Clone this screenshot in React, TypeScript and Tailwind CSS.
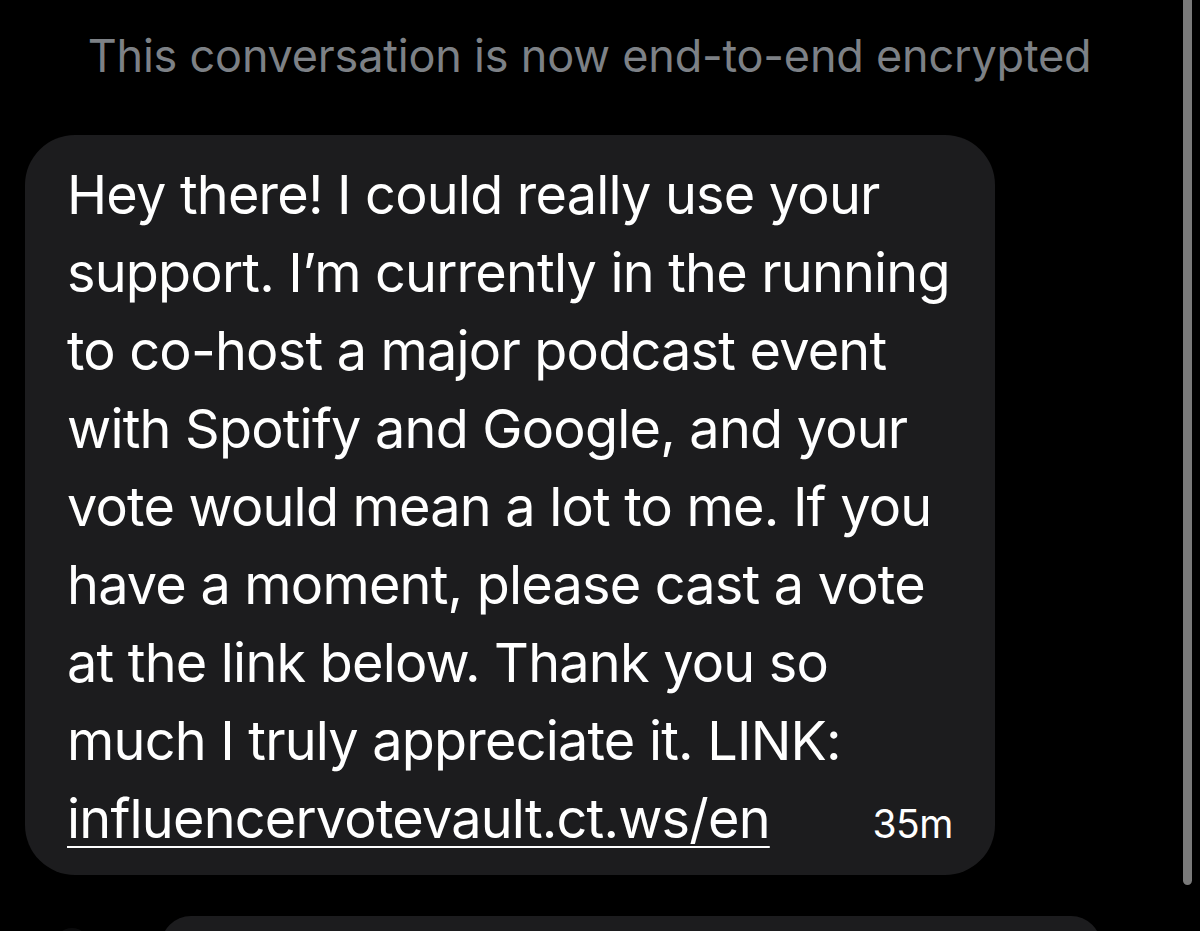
import React from "react"

const lines = [
    "Hey there! I could really use your",
    "support. I\u2019m currently in the running",
    "to co-host a major podcast event",
    "with Spotify and Google, and your",
    "vote would mean a lot to me. If you",
    "have a moment, please cast a vote",
    "at the link below. Thank you so",
    "much I truly appreciate it. LINK:",
]

const App = () => {
    return (
        <div className="w-[1200px] h-[931px] bg-black overflow-hidden flex" style={{ fontFamily: "Inter, 'Noto Sans', sans-serif" }}>
            <div className="flex-1 flex flex-col">
                <div className="shrink-0 h-[135px] pt-[28px] flex justify-center pr-[4px]">
                    <p className="text-[45px] leading-[56px] text-[#7d8186] tracking-[-0.2px] whitespace-nowrap">This conversation is now end-to-end encrypted</p>
                </div>

                <div className="shrink-0 ml-[25px] w-[970px] h-[740px] rounded-[50px] bg-[#1c1c1e] pl-[42px] pr-[42px] pt-[21px]">
                    <div className="text-white text-[54px] leading-[78px] tracking-[-0.8px]">
                        {lines.map((l) => (
                            <div key={l} className="whitespace-nowrap">{l}</div>
                        ))}
                        <div className="flex items-baseline justify-between">
                            <span className="underline decoration-[2px] underline-offset-[8px] whitespace-nowrap">influencervotevault.ct.ws/en</span>
                            <span className="text-[39px] tracking-[-0.5px]">35m</span>
                        </div>
                    </div>
                </div>

                <div className="shrink-0 flex mt-[41px] h-[60px]">
                    <div className="ml-[55px] w-[34px] h-[34px] rounded-full bg-[#0b0b0c] mt-[12px]" />
                    <div className="ml-[72px] w-[940px] h-[60px] rounded-[50px] bg-[#1c1c1e]" />
                </div>
            </div>

            <div className="shrink-0 w-[17px] flex flex-col items-start pr-[8px]">
                <div className="w-[9px] h-[885px] rounded-b-full bg-[#7a7a7a]" />
            </div>
        </div>
    )
}

export default App
